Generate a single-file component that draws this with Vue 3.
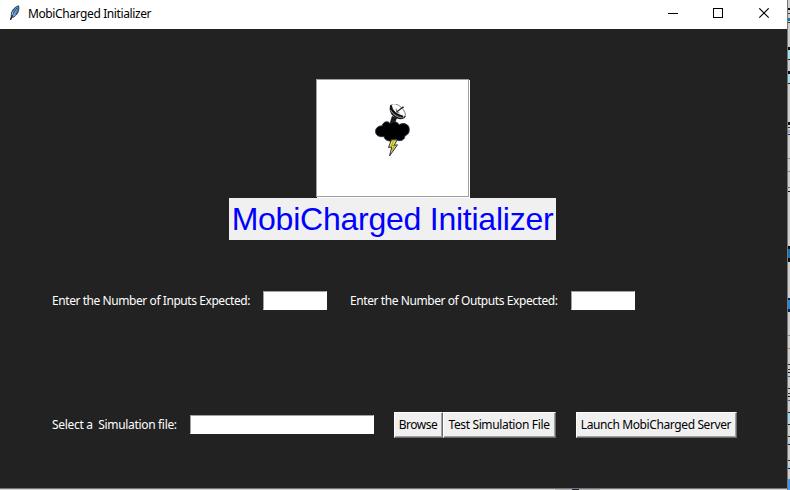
<script setup>
import { ref } from 'vue'

const inputs = ref('')
const outputs = ref('')
const file = ref('')

// Fragments of the window behind, visible along the right edge
const slivers = [
  { y: 8, h: 2, c: '#111' }, { y: 13, h: 1, c: '#345' }, { y: 18, h: 3, c: '#1673b5' }, { y: 22, h: 1, c: '#333' },
  { y: 47, h: 3, c: '#111' }, { y: 50, h: 9, c: '#a4dff0' }, { y: 59, h: 1, c: '#222' },
  { y: 71, h: 3, c: '#111' }, { y: 74, h: 9, c: '#a4dff0' }, { y: 83, h: 1, c: '#222' },
  { y: 122, h: 3, c: '#111' }, { y: 127, h: 1, c: '#333' }, { y: 130, h: 3, c: '#9ac' }, { y: 134, h: 1, c: '#334' },
  { y: 158, h: 1, c: '#888' }, { y: 171, h: 1, c: '#888' }, { y: 187, h: 1, c: '#777' }, { y: 191, h: 1, c: '#111' },
  { y: 246, h: 16, c: '#111' }, { y: 249, h: 9, c: '#1673b5' }, { y: 298, h: 14, c: '#124' }, { y: 300, h: 9, c: '#268bd2' },
  { y: 335, h: 1, c: '#888' }, { y: 348, h: 1, c: '#a87' },
  { y: 364, h: 1, c: '#333' }, { y: 369, h: 1, c: '#333' }, { y: 372, h: 1, c: '#111' }, { y: 376, h: 1, c: '#468' },
  { y: 388, h: 1, c: '#333' }, { y: 393, h: 1, c: '#333' }, { y: 396, h: 1, c: '#111' }, { y: 400, h: 1, c: '#468' },
  { y: 412, h: 1, c: '#222' }, { y: 413, h: 9, c: '#9ed7ee' }, { y: 424, h: 1, c: '#222' },
  { y: 436, h: 1, c: '#333' }, { y: 440, h: 4, c: '#b4d2e4' }, { y: 444, h: 1, c: '#222' },
  { y: 460, h: 1, c: '#333' }, { y: 464, h: 4, c: '#b4d2e4' }, { y: 468, h: 1, c: '#124' },
  { y: 479, h: 11, c: '#4294e6' },
]
</script>

<template>
  <div class="desktop">
    <div class="window">
      <header class="titlebar">
        <svg class="feather" width="12" height="16" viewBox="0 0 12 16">
          <path d="M1.5 15 2.4 11 C1.7 7 4.5 2.5 9.5 .8 C10.8 4 9 10 4.2 12.2 L2.6 12.4Z" fill="#3a6ea5" stroke="#1b2430" stroke-width=".8" />
          <path d="M3.5 9 C4 6 6 3 8.6 1.8 C8.8 5 6.8 8.8 4.6 10.4" fill="#6fabe6" />
          <path d="M1.5 15 C3 10 5 7 8 3" fill="none" stroke="#18202a" stroke-width=".8" />
          <path d="M3.2 10 3.8 6.6M4 11 6.8 9.8" stroke="#b9d7ef" stroke-width=".7" />
        </svg>
        <span class="caption">MobiCharged Initializer</span>
        <svg class="controls" width="104" height="12" viewBox="0 0 104 12" fill="none" stroke="#000">
          <path d="M0 5.5H10M45.5 .5H54.5V9.5H45.5Z" shape-rendering="crispEdges" />
          <path d="M91.3 .3 100.7 9.7M100.7 .3 91.3 9.7" stroke-width="1.1" />
        </svg>
      </header>

      <main class="body">
        <div class="picture">
          <svg width="36" height="54" viewBox="0 0 36 54">
            <path d="M14.5 20 17 12 22 14 19.5 20Z" fill="#1c1417" />
            <path d="M15.6 .8 C13 6 16 12 22 14.5 C26 16 29.6 15.4 30.8 12.3Z" fill="#111" />
            <path d="M15.6 6 C17.5 10.5 23 14 29 13.8" fill="none" stroke="#d8d8d8" stroke-width=".8" />
            <ellipse cx="23.2" cy="6.5" rx="8.8" ry="4.4" transform="rotate(43 23.2 6.5)" fill="#fff" stroke="#333" stroke-width=".6" />
            <path d="M15.8 1.5 C16.5 6.5 21 11 28 12.6" fill="none" stroke="#111" stroke-width="2" />
            <path d="M21.5 8 28.2 3" fill="none" stroke="#161616" stroke-width="1.1" />
            <path d="M21.5 8 24.5 9M22 8 21 4.5" fill="none" stroke="#444" stroke-width=".7" />
            <circle cx="28" cy="3.2" r=".8" fill="#222" />
            <path d="M7 22 C8 17.5 13 16.5 15 19.5 C18 16.5 23 17.5 24 21 C28 18 34.5 20 34.2 25.5 C34.5 29 32 31.5 30 31.5 C30 36.5 24.5 38 21 35.5 C18 38 10 38 9 32.5 C4 33.5 .5 31 .6 27.5 C.5 24 3.5 21.5 7 22Z" fill="#000" stroke="#2b344b" stroke-width="1" />
            <path d="M16.4 35.8 13.5 43.5 16.8 43 14.5 52 22.5 40.8 19.2 41.3 22.2 35.8Z" fill="#f2e530" stroke="#26345c" stroke-width="1" />
            <path d="M18.5 37 16.5 41.8 20 40.8 17 46.5" fill="none" stroke="#5a5b36" stroke-width=".5" />
          </svg>
        </div>
        <h1 class="title">MobiCharged Initializer</h1>

        <div class="row counts">
          <label class="l-in" for="inputs">Enter the Number of Inputs Expected:</label>
          <input id="inputs" v-model="inputs" class="entry short" />
          <label class="l-out" for="outputs">Enter the Number of Outputs Expected:</label>
          <input id="outputs" v-model="outputs" class="entry short" />
        </div>

        <div class="row files">
          <label class="l-file" for="file">Select a&nbsp; Simulation file:</label>
          <input id="file" v-model="file" class="entry long" />
          <button class="browse">Browse</button>
          <button class="test">Test Simulation File</button>
          <button class="launch">Launch MobiCharged Server</button>
        </div>
      </main>
      <svg class="below" width="787" height="1" viewBox="0 0 787 1" shape-rendering="crispEdges">
        <rect width="787" height="1" fill="#d3d0cf" />
        <rect x="555" width="45" height="1" fill="#b4b4b6" />
        <rect x="572" width="7" height="1" fill="#1f2030" />
      </svg>
    </div>
    <svg class="behind" width="3" height="490" viewBox="0 0 3 490" shape-rendering="crispEdges">
      <rect width="3" height="490" fill="#cfcfcf" />
      <rect v-for="s in slivers" :key="s.y" x="1" :y="s.y" width="2" :height="s.h" :fill="s.c" />
      <rect width="1" height="490" fill="#777" />
    </svg>
  </div>
</template>

<style>
body {
  margin: 0;
  overflow: hidden;
}
</style>

<style scoped>
.desktop {
  display: flex;
  width: 790px;
  height: 490px;
  font-family: "Noto Sans", "Open Sans", sans-serif;
  font-size: 12px;
  line-height: 16px;
}
.window {
  display: flex;
  flex-direction: column;
  width: 787px;
  height: 490px;
  background: #222;
}
.titlebar {
  display: flex;
  box-sizing: border-box;
  height: 29px;
  padding: 5px 15px 0 9px;
  background: #fff;
  color: #000;
}
.caption {
  margin: 1px 0 0 7px;
  letter-spacing: -0.39px;
  white-space: nowrap;
}
.controls {
  margin: 3px 0 0 auto;
}
.below {
  display: block;
  flex: none;
}
.body {
  display: flex;
  flex: 1;
  flex-direction: column;
  align-items: center;
  padding-top: 50px;
  border-bottom: 1px solid #777;
}
.picture {
  display: flex;
  justify-content: center;
  box-sizing: border-box;
  width: 153px;
  height: 118px;
  padding: 24px 0 0 1px;
  border: 1px solid #a0a0a0;
  background: #fff;
  box-shadow: 1px 1px #fff;
  margin: 0 2px 1px 0;
}
.title {
  box-sizing: border-box;
  width: 327px;
  height: 42px;
  margin: 0 2px 0 0;
  background: #f0f0f0;
  color: #00f;
  font: 400 32px/42px "Liberation Sans", Arial, sans-serif;
  letter-spacing: -0.24px;
  text-align: center;
  white-space: nowrap;
}
.row {
  display: flex;
  align-items: center;
  align-self: stretch;
  height: 26px;
  padding-left: 52px;
  color: #fff;
  white-space: nowrap;
}
.counts {
  margin-top: 48px;
}
.files {
  margin-top: 98px;
}
.l-in,
.l-out,
.l-file {
  flex: none;
}
.l-in {
  width: 211px;
  letter-spacing: -0.43px;
}
.l-out {
  width: 221px;
  margin-left: 23px;
  letter-spacing: -0.42px;
}
.l-file {
  width: 138px;
  letter-spacing: -0.32px;
}
.entry {
  box-sizing: border-box;
  height: 19px;
  margin: 0 0 1px;
  padding: 0 2px;
  border: 1px solid #fff;
  border-top-color: #a0a0a0;
  border-left-color: #a0a0a0;
  border-radius: 0;
  background: #fff;
  outline: 0;
  font: inherit;
}
.short {
  width: 64px;
}
.long {
  width: 184px;
}
button {
  box-sizing: border-box;
  flex: none;
  height: 26px;
  padding: 0 1px 0 0;
  border: 1px solid #fff;
  border-right-color: #696969;
  border-bottom-color: #696969;
  border-radius: 0;
  background: #f0f0f0;
  box-shadow: inset -1px -1px #a0a0a0;
  color: #000;
  font: inherit;
  letter-spacing: -0.39px;
  white-space: nowrap;
}
.browse {
  width: 49px;
  margin-left: 20px;
  letter-spacing: -0.5px;
}
.test {
  width: 113px;
  letter-spacing: -0.36px;
}
.launch {
  width: 161px;
  margin-left: 20px;
}
</style>
